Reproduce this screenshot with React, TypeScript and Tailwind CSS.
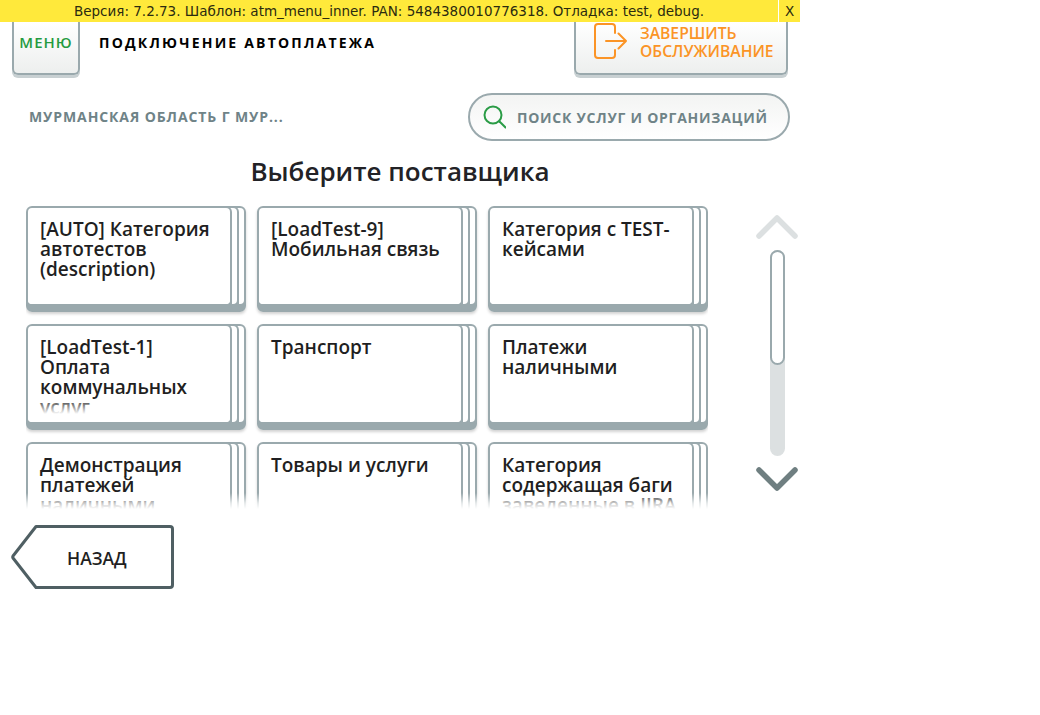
const F = "font-['Open_Sans','Noto_Sans',sans-serif]";

const cards = [
  "[AUTO] Категория автотестов (description)",
  "[LoadTest-9] Мобильная связь",
  "Категория с TEST-кейсами",
  "[LoadTest-1] Оплата коммунальных услуг",
  "Транспорт",
  "Платежи наличными",
  "Демонстрация платежей наличными",
  "Товары и услуги",
  "Категория содержащая баги заведенные в JIRA",
];

const layer = "absolute top-0 bottom-0 rounded-[6px] border-2 border-b-[8px] border-[#9aa9ad] bg-[#9aa9ad]";

function Card({ text }: { text: string }) {
  return (
    <div className="relative w-[220px] h-[106px] rounded-[6px] shadow-[0_2px_3px_rgba(0,0,0,0.18)]">
      <div className={`${layer} left-[14px] right-0`}>
        <div className="h-full rounded-[4px] bg-white" />
      </div>
      <div className={`${layer} left-[7px] right-[7px]`}>
        <div className="h-full rounded-[4px] bg-white" />
      </div>
      <div className={`${layer} left-0 right-[14px]`}>
        <div className="relative h-full rounded-[4px] bg-white overflow-hidden px-[12px] pt-[11px]">
          <p className={`${F} text-[19px] leading-[20px] font-semibold text-[#1f1f22]`}>{text}</p>
          <div className="absolute left-0 right-0 bottom-[8px] h-[16px] bg-gradient-to-b from-white/0 to-white" />
          <div className="absolute left-0 right-0 bottom-0 h-[8px] bg-white" />
        </div>
      </div>
    </div>
  );
}

export default function App() {
  return (
    <div className="w-[1040px] h-[715px] bg-white overflow-hidden">
      <div className="w-[800px] h-[600px] flex flex-col">
        <div className="flex h-[22px] bg-[#ffe93b] font-['DejaVu_Sans',sans-serif] text-[13.5px] leading-[22px] text-[#2b2b10]">
          <div className="w-[778px] text-center whitespace-nowrap">Версия: 7.2.73. Шаблон: atm_menu_inner. PAN: 5484380010776318. Отладка: test, debug.</div>
          <div className="w-[22px] ml-auto text-center border-l border-white">X</div>
        </div>

        <div className="flex items-start h-[53px]">
          <div className={`ml-[12px] w-[68px] h-[53px] rounded-b-[6px] border-2 border-t-0 border-[#9aa9ad] bg-gradient-to-b from-white to-[#edefee] shadow-[0_3px_0_rgba(154,169,173,0.55)] flex items-center justify-center ${F} text-[15px] font-semibold tracking-[1px] text-[#249a40] pb-[11px]`}>
            МЕНЮ
          </div>
          <div className={`ml-[19px] mt-[11px] ${F} text-[14px] leading-[20px] font-bold tracking-[2.2px] text-black`}>ПОДКЛЮЧЕНИЕ АВТОПЛАТЕЖА</div>
          <div className="ml-auto mr-[12px] w-[214px] h-[53px] rounded-b-[6px] border-2 border-t-0 border-[#9aa9ad] bg-gradient-to-b from-white to-[#edefee] shadow-[0_3px_0_rgba(154,169,173,0.55)] flex items-start pl-[18px] pt-[1px]">
            <svg width="33" height="36" viewBox="0 0 33 36" fill="none" stroke="#fb9426" strokeWidth="2" strokeLinecap="round" strokeLinejoin="round">
              <path d="M21 10V4a3 3 0 0 0-3-3H4a3 3 0 0 0-3 3v28a3 3 0 0 0 3 3h14a3 3 0 0 0 3-3v-5" />
              <path d="M12 18h20M24.500 10.500l7.500 7.500-7.500 7.500" />
            </svg>
            <div className={`ml-[13px] ${F} text-[15.7px] leading-[18px] font-semibold text-[#fb9426] mt-[1px] whitespace-nowrap`}>ЗАВЕРШИТЬ<br />ОБСЛУЖИВАНИЕ</div>
          </div>
        </div>

        <div className="flex items-center mt-[18px] h-[48px]">
          <div className={`ml-[29px] pb-[2px] ${F} text-[14px] font-bold tracking-[0.9px] text-[#6f8387]`}>МУРМАНСКАЯ ОБЛАСТЬ Г МУР...</div>
          <div className="ml-auto mr-[10px] w-[322px] h-[48px] rounded-full border-2 border-[#9aa9ad] bg-gradient-to-b from-[#f3f4f3] to-white flex items-center pl-[13px]">
            <svg width="23" height="24" viewBox="0 0 23 24" fill="none" stroke="#2a9c46" strokeWidth="2" strokeLinecap="round">
              <circle cx="10" cy="10" r="8.500" />
              <path d="M16.500 16.500l6 6" />
            </svg>
            <span className={`ml-[11px] ${F} text-[14px] font-bold tracking-[0.75px] text-[#6f8387] whitespace-nowrap`}>ПОИСК УСЛУГ И ОРГАНИЗАЦИЙ</span>
          </div>
        </div>

        <h1 className={`mt-[14px] h-[37px] text-center ${F} text-[26px] leading-[32px] font-semibold text-[#222226]`}>Выберите поставщика</h1>

        <div className="flex mt-[14px]">
          <div className="relative ml-[26px] h-[307px] overflow-hidden">
            <div className="grid grid-cols-[220px_220px_220px] gap-x-[11px] gap-y-[12px]">
              {cards.map((c, i) => <Card key={i} text={c} />)}
            </div>
            <div className="absolute left-0 right-0 bottom-0 h-[20px] bg-gradient-to-b from-white/0 via-white/75 via-50% to-white to-80%" />
          </div>
          <div className="ml-[48px] w-[42px] flex flex-col items-center pt-[9px]">
            <svg width="42" height="24" viewBox="0 0 42 24" fill="none" stroke="#dce0e1" strokeWidth="5.500" strokeLinecap="round" strokeLinejoin="round">
              <path d="M3 21L21 3l18 18" />
            </svg>
            <div className="mt-[11px] w-[15px] h-[206px] rounded-full bg-[#dce0e1]">
              <div className="h-[115px] rounded-full border-2 border-[#9aa9ad] bg-white" />
            </div>
            <svg className="mt-[11px]" width="42" height="24" viewBox="0 0 42 24" fill="none" stroke="#6f7f81" strokeWidth="5.500" strokeLinecap="round" strokeLinejoin="round">
              <path d="M3 3l18 18L39 3" />
            </svg>
          </div>
        </div>

        <div className="ml-[11px] mt-[12px] relative w-[163px] h-[64px]">
          <svg className="absolute inset-0" width="163" height="64" viewBox="0 0 163 64" fill="white" stroke="#4f5f63" strokeWidth="3" strokeLinejoin="round">
            <path d="M25 1.500H159a2.500 2.500 0 0 1 2.500 2.500V60a2.500 2.500 0 0 1-2.500 2.500H25L2 33a2 2 0 0 1 0-2z" />
          </svg>
          <div className={`relative h-full flex items-center pl-[56px] pt-[2px] ${F} text-[17.5px] font-semibold text-[#1f1f22]`}>НАЗАД</div>
        </div>
      </div>
    </div>
  );
}
